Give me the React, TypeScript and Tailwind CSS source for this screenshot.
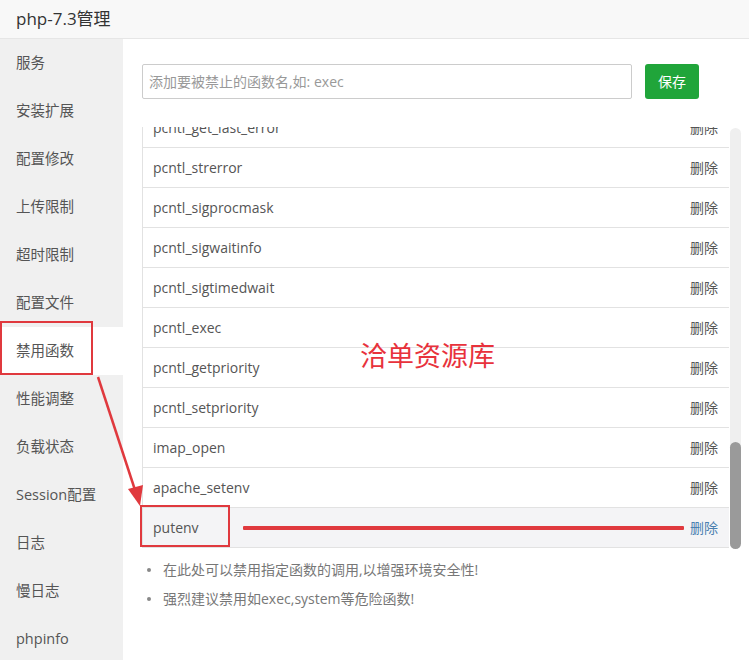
import React from 'react';

const menu = [
  '服务',
  '安装扩展',
  '配置修改',
  '上传限制',
  '超时限制',
  '配置文件',
  '禁用函数',
  '性能调整',
  '负载状态',
  'Session配置',
  '日志',
  '慢日志',
  'phpinfo',
];

const funcs = [
  'pcntl_get_last_error',
  'pcntl_strerror',
  'pcntl_sigprocmask',
  'pcntl_sigwaitinfo',
  'pcntl_sigtimedwait',
  'pcntl_exec',
  'pcntl_getpriority',
  'pcntl_setpriority',
  'imap_open',
  'apache_setenv',
];

const font = { fontFamily: '"Open Sans", "Noto Sans CJK SC", sans-serif' };

export default function App() {
  return (
    <div
      className="relative w-[749px] h-[660px] overflow-hidden bg-white text-[#555]"
      style={font}
    >
      {/* header */}
      <div className="h-[39px] bg-[#f8f8f8] border-b border-[#e6e6e6] pl-4 text-[17px] leading-[38px] text-[#333]">
        php-7.3管理
      </div>

      <div className="flex h-[621px]">
        {/* sidebar */}
        <div className="w-[123px] bg-[#f0f0f0] shrink-0">
          {menu.map((m) => (
            <div
              key={m}
              className={
                'h-[48px] pl-4 flex items-center text-[14.5px] text-[#555] ' +
                (m === '禁用函数' ? 'bg-white' : '')
              }
            >
              {m}
            </div>
          ))}
        </div>

        {/* main */}
        <div className="flex-1 pl-[19px] pt-[25px]">
          <div className="flex items-center">
            <div className="w-[490px] h-[35px] border border-[#ccc] rounded-[2px] px-[6px] flex items-center text-[14px] text-[#999]">
              添加要被禁止的函数名,如: exec
            </div>
            <button className="ml-[13px] w-[54px] h-[35px] bg-[#20a53a] rounded-[3px] text-white text-[14px]">
              保存
            </button>
          </div>

          <div className="mt-[28px] flex w-[599px]">
            <div className="w-[587px] h-[421px] overflow-hidden border-l border-[#e2e2e2]">
              <div className="-mt-[19px]">
                {funcs.map((f) => (
                  <div
                    key={f}
                    className="h-[40px] border-b border-[#e2e2e2] pl-[10px] pr-[11px] flex items-center justify-between text-[14px]"
                  >
                    <span>{f}</span>
                    <span>删除</span>
                  </div>
                ))}
                <div className="h-[40px] border-b border-[#e2e2e2] bg-[#f4f4f6] pl-[10px] pr-[11px] flex items-center text-[14px]">
                  <span>putenv</span>
                  <div className="ml-[44px] flex-1 h-[4px] bg-[#e0393e] rounded-[1px]" />
                  <span className="ml-[6px] text-[#4a7fb0]">删除</span>
                </div>
              </div>
            </div>
            {/* scrollbar */}
            <div className="ml-[1px] w-[11px] h-[421px] mt-[1px] bg-[#efefef] rounded-[6px] flex flex-col justify-end">
              <div className="h-[107px] bg-[#9a9a9a] rounded-[6px]" />
            </div>
          </div>

          <ul className="mt-[6px] pl-[5px] text-[14px] text-[#777]">
            <li className="h-[29px] flex items-center">
              <span className="w-[4px] h-[4px] rounded-full bg-[#888] mr-[12px]" />
              在此处可以禁用指定函数的调用,以增强环境安全性!
            </li>
            <li className="h-[29px] flex items-center">
              <span className="w-[4px] h-[4px] rounded-full bg-[#888] mr-[12px]" />
              强烈建议禁用如exec,system等危险函数!
            </li>
          </ul>
        </div>
      </div>

      {/* annotations */}
      <div className="absolute left-[360px] top-[336px] text-[27px] leading-[40px] text-[#e8323c]">洽单资源库</div>
      <div className="absolute left-[0px] top-[321px] w-[93px] h-[54px] border-2 border-[#e0393e]" />
      <div className="absolute left-[140px] top-[505px] w-[90px] h-[42px] border-2 border-[#e0393e]" />
      <svg className="absolute left-0 top-0" width="749" height="660">
        <line x1="98" y1="377" x2="135" y2="490" stroke="#e0393e" strokeWidth="2.5" />
        <polygon points="140,506 128,489 143,485" fill="#e0393e" />
      </svg>
    </div>
  );
}
